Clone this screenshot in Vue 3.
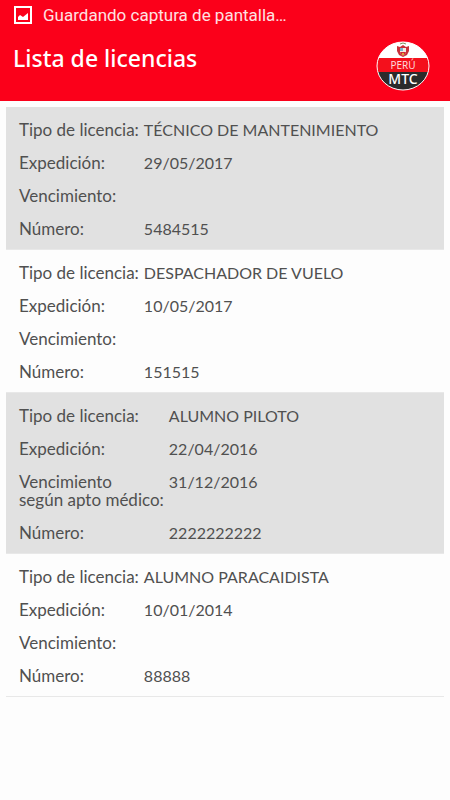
<template>
  <div class="screen">
    <header class="top">
      <div class="status">
        <svg class="status-icon" viewBox="0 0 18 18" aria-hidden="true">
          <path fill="#fff" fill-rule="evenodd" d="M0 0h18v18H0zM2 2v14h14V2z" />
          <path fill="#fff" d="M4 14v-3l2-2 3 2 5-4v7z" />
        </svg>
        <span>Guardando captura de pantalla…</span>
      </div>
      <div class="title-bar">
        <h1>Lista de licencias</h1>
        <svg class="logo" viewBox="0 0 54 50" role="img" aria-label="Perú MTC">
          <defs>
            <clipPath id="badge">
              <ellipse cx="27" cy="25" rx="26" ry="24" />
            </clipPath>
          </defs>
          <g clip-path="url(#badge)">
            <path fill="#fff" d="M0 0h54v17H0z" />
            <path fill="#f4101c" d="M0 17h54v14H0z" />
            <path fill="#2b2b2b" d="M0 31h54v19H0z" />
          </g>
          <ellipse cx="27" cy="25" rx="26" ry="24" fill="none" stroke="#fff" stroke-width="1" />
          <!-- coat of arms -->
          <path fill="none" stroke="#7d9460" stroke-width="1" d="M24 3q3-2 6 0" />
          <path fill="#c9303a" d="M21 5l3 1 3-2 3 2 3-1v5l-2 4-4 2-4-2-2-4z" />
          <path fill="#f3ece4" d="M24 7h6v4q-1 3-3 4-2-1-3-4z" />
          <path fill="#79b4cf" d="M24 7h3v3h-3z" />
          <path fill="#d22b35" d="M24 11h6q-1 3-3 4-2-1-3-4z" />
          <path fill="#d8a43c" d="M26 12h2v2h-2z" />
          <text class="logo-country" x="27" y="28" text-anchor="middle">PERÚ</text>
          <text class="logo-name" x="27" y="43" text-anchor="middle">MTC</text>
        </svg>
      </div>
    </header>

    <main class="list">
      <dl v-for="item in licencias" :key="item.numero" class="card">
        <dt>Tipo de licencia:</dt>
        <dd>{{ item.tipo }}</dd>
        <dt>Expedición:</dt>
        <dd>{{ item.expedicion }}</dd>
        <dt v-if="item.aptoMedico">Vencimiento<br />según apto médico:</dt>
        <dt v-else>Vencimiento:</dt>
        <dd>{{ item.vencimiento }}</dd>
        <dt>Número:</dt>
        <dd>{{ item.numero }}</dd>
      </dl>
    </main>
  </div>
</template>

<script setup>
const licencias = [
  { tipo: 'TÉCNICO DE MANTENIMIENTO', expedicion: '29/05/2017', vencimiento: '', numero: '5484515' },
  { tipo: 'DESPACHADOR DE VUELO', expedicion: '10/05/2017', vencimiento: '', numero: '151515' },
  {
    tipo: 'ALUMNO PILOTO',
    expedicion: '22/04/2016',
    vencimiento: '31/12/2016',
    numero: '2222222222',
    aptoMedico: true,
  },
  { tipo: 'ALUMNO PARACAIDISTA', expedicion: '10/01/2014', vencimiento: '', numero: '88888' },
];
</script>

<style>
body {
  background: #fdfdfd;
}
</style>

<style scoped>
.screen {
  font-family: Lato, 'Noto Sans', sans-serif;
  color: #505050;
}

.top {
  background: #fb001a;
  color: #fff;
  padding-bottom: 7px;
}

.status {
  display: flex;
  align-items: center;
  gap: 11px;
  height: 30px;
  padding-left: 14px;
  font-family: Roboto, sans-serif;
  font-size: 17px;
  color: #ffe0e2;
}

.status-icon {
  width: 18px;
  height: 18px;
}

.title-bar {
  display: flex;
  justify-content: space-between;
  align-items: flex-start;
  padding: 11px 20px 3px 13px;
}

h1 {
  margin: 0;
  font-family: 'Noto Sans', sans-serif;
  font-size: 23px;
  line-height: 34px;
  font-weight: 500;
}

.logo {
  width: 54px;
  height: 50px;
  font-family: 'Noto Sans', sans-serif;
}

.logo-country {
  fill: #ffd9db;
  font-size: 10px;
}

.logo-name {
  fill: #fff;
  font-size: 14px;
  font-weight: 500;
}

.list {
  padding: 6px;
}

.card {
  display: grid;
  grid-template-columns: auto 1fr;
  gap: 15px 5px;
  margin: 0;
  padding: 14px 13px 11px;
  border-bottom: 1px solid #e8e8e8;
  font-size: 17px;
  line-height: 18px;
}

.card:nth-child(odd) {
  background: #e1e1e1;
}

dd {
  margin: 0;
  font-size: 16px;
}
</style>
